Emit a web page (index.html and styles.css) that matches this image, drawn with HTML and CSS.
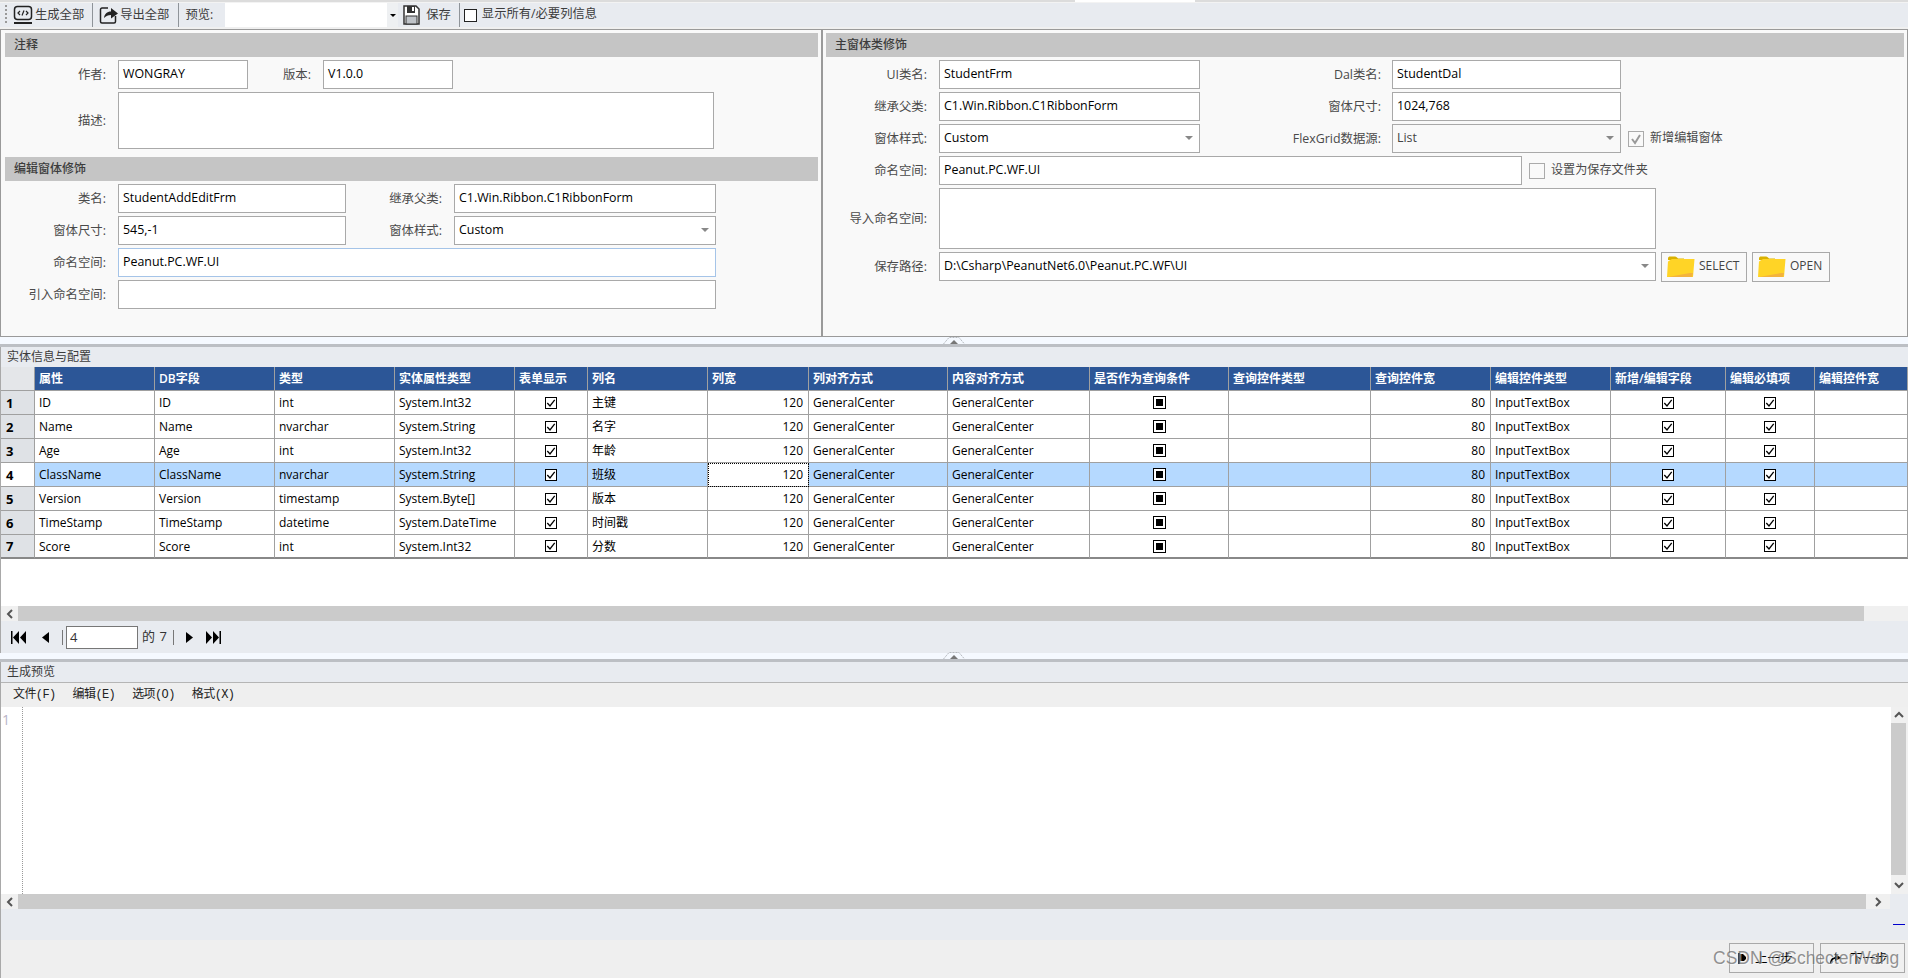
FILE: index.html
```html
<!DOCTYPE html>
<html lang="zh">
<head>
<meta charset="utf-8">
<title>Generator</title>
<link rel="stylesheet" href="styles.css">
</head>
<body>
<svg class="defs" width="0" height="0">
  <symbol id="chk" viewBox="0 0 12 12"><rect x="0.5" y="0.5" width="11" height="11" fill="#fff" stroke="#000"/><path d="M2.300 6l2.700 3L9.700 2.800" fill="none" stroke="#000" stroke-width="1.300"/></symbol>
  <symbol id="ind" viewBox="0 0 13 13"><rect x="0.5" y="0.5" width="12" height="12" fill="#fff" stroke="#000"/><rect x="3" y="3" width="7" height="7" fill="#000"/></symbol>
  <symbol id="folder" viewBox="0 0 28 22"><path d="M1 4V2.500C1 1 2 .5 3 .5h5c1.500 0 2 1 3 2h6v2z" fill="#d9b100"/><path d="M0 21L1 5.500 5 3h22.500L26 21z" fill="#ffd426"/><path d="M1 21l22-4h3l-1 4z" fill="#f3b33d"/></symbol>
  <symbol id="grabber" viewBox="0 0 22 7"><path d="M.5 7L6 .5h10L21.500 7" fill="none" stroke="#b4b8bd" stroke-dasharray="2 1"/><path d="M7 7l4-4 4 4z" fill="#777"/></symbol>
</svg>
<div class="topline"></div>
<div class="toolbar">
  <span class="grip"></span>
  <svg class="ico ico-gen" width="20" height="20" viewBox="0 0 20 20"><rect x="1.500" y="1.500" width="17" height="13" rx="3" fill="none" stroke="#222" stroke-width="1.500"/><path d="M1 18h18" stroke="#222" stroke-width="2"/><path d="M7 6L5 8l2 2M13 6l2 2-2 2M11 5.500L9 10.500" fill="none" stroke="#222" stroke-width="1.200"/></svg>
  <span class="tool-text t-gen">生成全部</span><span class="sep s1"></span>
  <svg class="ico ico-exp" width="20" height="20" viewBox="0 0 20 20"><path d="M9 3H3a1.500 1.500 0 0 0-1.500 1.500v12A1.500 1.500 0 0 0 3 18h12a1.500 1.500 0 0 0 1.500-1.500V11" fill="none" stroke="#222" stroke-width="1.500"/><path d="M5 13c.5-4 3-6.500 7-6.500V3l7 5.500-7 5V10c-3 0-5 1-7 3z" fill="#222"/></svg>
  <span class="tool-text t-exp">导出全部</span><span class="sep s2"></span>
  <span class="tool-text tool-preview">预览:</span>
  <div class="tool-combo"><span class="tool-drop"><i class="caret"></i></span></div>
  <svg class="ico ico-save" width="17" height="20" viewBox="0 0 17 20"><path d="M1 1h12l3 3v15H1z" fill="#fff" stroke="#333" stroke-width="1.500"/><rect x="4" y="1" width="8" height="7" fill="#333"/><rect x="9" y="2" width="2" height="4" fill="#fff"/><rect x="3" y="11" width="11" height="8" fill="#bfc3c8" stroke="#333"/></svg>
  <span class="tool-text tool-save">保存</span><span class="sep s3"></span>
  <span class="tool-check"></span>
  <span class="tool-text tool-all">显示所有/必要列信息</span>
</div>

<div class="top">
  <section class="panel panel-left">
    <h2 class="band">注释</h2>
    <div class="rows">
      <div class="row"><label class="lbl lbl-l">作者:</label><div class="inp w130">WONGRAY</div><label class="lbl lbl-ver">版本:</label><div class="inp w130">V1.0.0</div></div>
      <div class="row tall57"><label class="lbl lbl-l">描述:</label><div class="inp w597"></div></div>
    </div>
    <h2 class="band band2">编辑窗体修饰</h2>
    <div class="rows">
      <div class="row"><label class="lbl lbl-l">类名:</label><div class="inp w228">StudentAddEditFrm</div><label class="lbl lbl-m">继承父类:</label><div class="inp w262">C1.Win.Ribbon.C1RibbonForm</div></div>
      <div class="row"><label class="lbl lbl-l">窗体尺寸:</label><div class="inp w228">545,-1</div><label class="lbl lbl-m">窗体样式:</label><div class="inp w262 combo">Custom<i class="drop"></i></div></div>
      <div class="row"><label class="lbl lbl-l">命名空间:</label><div class="inp w598 focus">Peanut.PC.WF.UI</div></div>
      <div class="row"><label class="lbl lbl-l">引入命名空间:</label><div class="inp w598"></div></div>
    </div>
  </section>
  <section class="panel panel-right">
    <h2 class="band">主窗体类修饰</h2>
    <div class="rows">
      <div class="row"><label class="lbl lbl-r">UI类名:</label><div class="inp w261">StudentFrm</div><label class="lbl lbl-r2">Dal类名:</label><div class="inp w229">StudentDal</div></div>
      <div class="row"><label class="lbl lbl-r">继承父类:</label><div class="inp w261">C1.Win.Ribbon.C1RibbonForm</div><label class="lbl lbl-r2">窗体尺寸:</label><div class="inp w229">1024,768</div></div>
      <div class="row"><label class="lbl lbl-r">窗体样式:</label><div class="inp w261 combo">Custom<i class="drop"></i></div><label class="lbl lbl-r2">FlexGrid数据源:</label><div class="inp w229 combo disabled">List<i class="drop"></i></div><span class="opt opt1"><i class="cb"><svg width="14" height="14" viewBox="0 0 14 14"><path d="M3 7l3 4 5-8" fill="none" stroke="#999" stroke-width="2"/></svg></i>新增编辑窗体</span></div>
      <div class="row"><label class="lbl lbl-r">命名空间:</label><div class="inp w583">Peanut.PC.WF.UI</div><span class="opt opt2"><i class="cb"></i>设置为保存文件夹</span></div>
      <div class="row tall61"><label class="lbl lbl-r">导入命名空间:</label><div class="inp w717"></div></div>
      <div class="row"><label class="lbl lbl-r">保存路径:</label><div class="inp w717 combo">D:\Csharp\PeanutNet6.0\Peanut.PC.WF\UI<i class="drop"></i></div>
        <button class="fbtn fb-sel"><svg width="28" height="22"><use href="#folder"/></svg>SELECT</button>
        <button class="fbtn fb-open"><svg width="28" height="22"><use href="#folder"/></svg>OPEN</button>
      </div>
    </div>
  </section>
</div>

<div class="split"><svg class="grab" width="22" height="7"><use href="#grabber"/></svg></div>

<section class="entity">
  <div class="caption">实体信息与配置</div>
  <div class="grid-row grid-head">
    <div class="c rh"></div><div class="c">属性</div><div class="c">DB字段</div><div class="c">类型</div><div class="c">实体属性类型</div><div class="c">表单显示</div><div class="c">列名</div><div class="c">列宽</div><div class="c">列对齐方式</div><div class="c">内容对齐方式</div><div class="c">是否作为查询条件</div><div class="c">查询控件类型</div><div class="c">查询控件宽</div><div class="c">编辑控件类型</div><div class="c">新增/编辑字段</div><div class="c">编辑必填项</div><div class="c">编辑控件宽</div>
  </div>
  <div class="grid-row">
    <div class="c rh">1</div><div class="c">ID</div><div class="c">ID</div><div class="c">int</div><div class="c">System.Int32</div><div class="c ctr"><svg width="12" height="12"><use href="#chk"/></svg></div><div class="c">主键</div><div class="c num">120</div><div class="c">GeneralCenter</div><div class="c">GeneralCenter</div><div class="c ctr"><svg width="13" height="13"><use href="#ind"/></svg></div><div class="c"></div><div class="c num">80</div><div class="c">InputTextBox</div><div class="c ctr"><svg width="12" height="12"><use href="#chk"/></svg></div><div class="c ctr"><svg width="12" height="12"><use href="#chk"/></svg></div><div class="c"></div>
  </div>
  <div class="grid-row">
    <div class="c rh">2</div><div class="c">Name</div><div class="c">Name</div><div class="c">nvarchar</div><div class="c">System.String</div><div class="c ctr"><svg width="12" height="12"><use href="#chk"/></svg></div><div class="c">名字</div><div class="c num">120</div><div class="c">GeneralCenter</div><div class="c">GeneralCenter</div><div class="c ctr"><svg width="13" height="13"><use href="#ind"/></svg></div><div class="c"></div><div class="c num">80</div><div class="c">InputTextBox</div><div class="c ctr"><svg width="12" height="12"><use href="#chk"/></svg></div><div class="c ctr"><svg width="12" height="12"><use href="#chk"/></svg></div><div class="c"></div>
  </div>
  <div class="grid-row">
    <div class="c rh">3</div><div class="c">Age</div><div class="c">Age</div><div class="c">int</div><div class="c">System.Int32</div><div class="c ctr"><svg width="12" height="12"><use href="#chk"/></svg></div><div class="c">年龄</div><div class="c num">120</div><div class="c">GeneralCenter</div><div class="c">GeneralCenter</div><div class="c ctr"><svg width="13" height="13"><use href="#ind"/></svg></div><div class="c"></div><div class="c num">80</div><div class="c">InputTextBox</div><div class="c ctr"><svg width="12" height="12"><use href="#chk"/></svg></div><div class="c ctr"><svg width="12" height="12"><use href="#chk"/></svg></div><div class="c"></div>
  </div>
  <div class="grid-row selected">
    <div class="c rh">4</div><div class="c">ClassName</div><div class="c">ClassName</div><div class="c">nvarchar</div><div class="c">System.String</div><div class="c ctr"><svg width="12" height="12"><use href="#chk"/></svg></div><div class="c">班级</div><div class="c num cur">120</div><div class="c">GeneralCenter</div><div class="c">GeneralCenter</div><div class="c ctr"><svg width="13" height="13"><use href="#ind"/></svg></div><div class="c"></div><div class="c num">80</div><div class="c">InputTextBox</div><div class="c ctr"><svg width="12" height="12"><use href="#chk"/></svg></div><div class="c ctr"><svg width="12" height="12"><use href="#chk"/></svg></div><div class="c"></div>
  </div>
  <div class="grid-row">
    <div class="c rh">5</div><div class="c">Version</div><div class="c">Version</div><div class="c">timestamp</div><div class="c">System.Byte[]</div><div class="c ctr"><svg width="12" height="12"><use href="#chk"/></svg></div><div class="c">版本</div><div class="c num">120</div><div class="c">GeneralCenter</div><div class="c">GeneralCenter</div><div class="c ctr"><svg width="13" height="13"><use href="#ind"/></svg></div><div class="c"></div><div class="c num">80</div><div class="c">InputTextBox</div><div class="c ctr"><svg width="12" height="12"><use href="#chk"/></svg></div><div class="c ctr"><svg width="12" height="12"><use href="#chk"/></svg></div><div class="c"></div>
  </div>
  <div class="grid-row">
    <div class="c rh">6</div><div class="c">TimeStamp</div><div class="c">TimeStamp</div><div class="c">datetime</div><div class="c">System.DateTime</div><div class="c ctr"><svg width="12" height="12"><use href="#chk"/></svg></div><div class="c">时间戳</div><div class="c num">120</div><div class="c">GeneralCenter</div><div class="c">GeneralCenter</div><div class="c ctr"><svg width="13" height="13"><use href="#ind"/></svg></div><div class="c"></div><div class="c num">80</div><div class="c">InputTextBox</div><div class="c ctr"><svg width="12" height="12"><use href="#chk"/></svg></div><div class="c ctr"><svg width="12" height="12"><use href="#chk"/></svg></div><div class="c"></div>
  </div>
  <div class="grid-row last">
    <div class="c rh">7</div><div class="c">Score</div><div class="c">Score</div><div class="c">int</div><div class="c">System.Int32</div><div class="c ctr"><svg width="12" height="12"><use href="#chk"/></svg></div><div class="c">分数</div><div class="c num">120</div><div class="c">GeneralCenter</div><div class="c">GeneralCenter</div><div class="c ctr"><svg width="13" height="13"><use href="#ind"/></svg></div><div class="c"></div><div class="c num">80</div><div class="c">InputTextBox</div><div class="c ctr"><svg width="12" height="12"><use href="#chk"/></svg></div><div class="c ctr"><svg width="12" height="12"><use href="#chk"/></svg></div><div class="c"></div>
  </div>
  <div class="blank"></div>
  <div class="hbar"><span class="sb-btn sb-l"><svg width="8" height="10" viewBox="0 0 8 10"><path d="M6 1L2 5l4 4" fill="none" stroke="#555" stroke-width="2"/></svg></span><span class="track"></span><span class="sb-end"></span></div>
  <div class="pager">
    <svg class="pg pg-first" width="16" height="13" viewBox="0 0 16 13"><rect x="0" y="0" width="1.500" height="13" fill="#000"/><path d="M8 0v13L2 6.500zM15 0v13L9 6.500z" fill="#000"/></svg>
    <svg class="pg pg-prev" width="7" height="11" viewBox="0 0 7 11"><path d="M7 0v11L0 5.500z" fill="#000"/></svg>
    <span class="pg-sep pg-s1"></span>
    <div class="pg-input">4</div>
    <span class="pg-of">的 7</span>
    <span class="pg-sep pg-s2"></span>
    <svg class="pg pg-next" width="7" height="11" viewBox="0 0 7 11"><path d="M0 0v11l7-5.500z" fill="#000"/></svg>
    <svg class="pg pg-last" width="15" height="13" viewBox="0 0 15 13"><path d="M0 0v13l6-6.500zM7 0v13l6-6.500z" fill="#000"/><rect x="13.500" y="0" width="1.500" height="13" fill="#000"/></svg>
  </div>
</section>

<div class="split split2"><svg class="grab" width="22" height="7"><use href="#grabber"/></svg></div>

<section class="preview">
  <div class="caption caption2">生成预览</div>
  <div class="menu"><span>文件(F)</span><span>编辑(E)</span><span>选项(O)</span><span>格式(X)</span></div>
  <div class="editor">
    <div class="gutter">1</div>
    <div class="code"></div>
    <div class="vbar">
      <span class="vb-btn"><svg width="10" height="8" viewBox="0 0 10 8"><path d="M1 6l4-4 4 4" fill="none" stroke="#555" stroke-width="2"/></svg></span>
      <span class="vtrack"></span>
      <span class="vb-btn vb-end"><svg width="10" height="8" viewBox="0 0 10 8"><path d="M1 2l4 4 4-4" fill="none" stroke="#555" stroke-width="2"/></svg></span>
    </div>
  </div>
  <div class="hbar hbar2"><span class="sb-btn sb-l"><svg width="8" height="10" viewBox="0 0 8 10"><path d="M6 1L2 5l4 4" fill="none" stroke="#555" stroke-width="2"/></svg></span><span class="track"></span><span class="sb-btn sb-r"><svg width="8" height="10" viewBox="0 0 8 10"><path d="M2 1l4 4-4 4" fill="none" stroke="#555" stroke-width="2"/></svg></span></div>
  <div class="status"><i class="under"></i></div>
  <div class="footer">
    <button class="nav nav-prev"><svg width="9" height="11" viewBox="0 0 9 11"><path d="M1 0v11" stroke="#000" stroke-width="1.500"/><path d="M2 1h3l3 3v2L6 8H2z" fill="#000"/></svg>上一步</button>
    <button class="nav nav-next"><svg width="13" height="14" viewBox="0 0 13 14"><path d="M1 13c0-4 2-7 5-7V2l6 5-6 3V8c-2 0-3 2-5 5z" fill="#000"/></svg>下一步</button>
  </div>
</section>
<div class="watermark">CSDN @SchecterWang</div>
</body>
</html>
```
FILE: styles.css
```css
* { box-sizing: border-box; }
html, body { margin: 0; padding: 0; }
body {
  position: relative;
  width: 1908px;
  height: 978px;
  overflow: hidden;
  background: #f0f0f0;
  color: #000;
  font: 12px/1.2 "Open Sans", "Noto Sans CJK SC", sans-serif;
}
.defs { position: absolute; }
svg { display: block; flex: none; }

/* toolbar */
.topline {
  height: 2px;
  background: linear-gradient(90deg, #dcdcdc 1075px, #fff 1075px, #fff 1195px, #dcdcdc 1195px);
}
.toolbar {
  height: 25px;
  margin-bottom: 2px;
  background: #e8ebf0;
  display: flex;
  align-items: center;
  color: #3c3c3c;
  font-size: 12.300px;
  border-top: 1px solid #f3f3f3;
}
.grip {
  width: 2px;
  height: 20px;
  margin-left: 5px;
  background: repeating-linear-gradient(180deg, #999 0 2px, transparent 2px 4px);
}
.ico-gen { margin-left: 6px; }
.tool-text { white-space: nowrap; }
.t-gen { margin-left: 2px; }
.t-exp { margin-left: 1px; }
.sep { width: 1px; height: 24px; background: #8f9499; }
.s1 { margin: 0 6px 0 8px; }
.s2 { margin: 0 6px 0 9px; }
.s3 { margin: 0 4px 0 8px; }
.tool-combo {
  width: 173px;
  height: 24px;
  margin-left: 12px;
  background: #fff;
  display: flex;
  justify-content: flex-end;
}
.tool-drop {
  width: 11px;
  background: #eef0f2;
  display: flex;
  align-items: center;
  justify-content: center;
}
.caret {
  width: 0;
  height: 0;
  border: 3px solid transparent;
  border-top: 3px solid #000;
  border-bottom: 0;
}
.ico-save { margin-left: 5px; }
.tool-save { margin-left: 6px; }
.tool-check {
  width: 13px;
  height: 13px;
  border: 1px solid #222;
  background: #fff;
  margin-right: 5px;
}
.tool-all { position: relative; top: -1px; }

/* top panels */
.top { height: 308px; display: flex; }
.panel {
  height: 308px;
  background: #f9f9f9;
  border: 1px solid #9a9a9a;
  border-width: 1px 0;
}
.panel-left { width: 821px; border-left: 1px solid #9a9a9a; padding: 3px 0 0 4px; }
.panel-right {
  width: 1087px;
  border-left: 2px solid #9a9a9a;
  border-right: 1px solid #9a9a9a;
  padding: 3px 0 0 3px;
}
.band {
  margin: 0;
  height: 24px;
  padding-left: 9px;
  line-height: 24px;
  font-size: 12px;
  font-weight: 500;
  color: #3c3c3c;
  background: #c5c5c5;
}
.panel-left .band { width: 813px; }
.panel-right .band { width: 1078px; }
.band2 { margin-top: 8px; }
.rows { display: flex; flex-direction: column; gap: 3px; padding-top: 3px; }
.row { display: flex; align-items: center; height: 29px; }
.tall57 { height: 57px; }
.tall61 { height: 61px; }
.lbl {
  text-align: right;
  color: #4a4a4a;
  font-size: 12.400px;
  padding-top: 2px;
  white-space: nowrap;
  flex: none;
}
.lbl-l { width: 101px; margin-right: 12px; }
.lbl-ver { width: 63px; margin-right: 12px; }
.lbl-m { width: 96px; margin-right: 12px; }
.lbl-r { width: 101px; margin-right: 12px; }
.lbl-r2 { width: 181px; margin-right: 11px; }
.inp {
  position: relative;
  height: 100%;
  background: #fff;
  border: 1px solid #a9a9a9;
  padding: 5px 4px;
  font-size: 12.400px;
  white-space: nowrap;
  line-height: 16px;
  flex: none;
}
.focus { border-color: #a5c4e8; }
.disabled { background: #f9f9f9; color: #444; }
.w130 { width: 130px; }
.w228 { width: 228px; }
.w229 { width: 229px; }
.w262 { width: 262px; }
.w261 { width: 261px; }
.w583 { width: 583px; }
.w597 { width: 596px; }
.w598 { width: 598px; }
.w717 { width: 717px; }
.combo .drop {
  position: absolute;
  right: 6px;
  top: 11px;
  width: 0;
  height: 0;
  border: 4px solid transparent;
  border-top: 4px solid #888;
  border-bottom: 0;
}
.opt { display: flex; align-items: center; color: #4a4a4a; font-size: 12.100px; white-space: nowrap; }
.opt1 { margin-left: 7px; }
.opt2 { margin-left: 7px; }
.cb {
  width: 16px;
  height: 16px;
  margin-right: 6px;
  border: 1px solid #aaa;
  background: #f9f9f9;
}
.fbtn {
  height: 30px;
  margin-left: 5px;
  padding: 0 0 0 5px;
  border: 1px solid #a9a9a9;
  background: #f9f9f9;
  color: #444;
  font: inherit;
  display: flex;
  align-items: center;
  gap: 4px;
}
.fb-sel { width: 86px; }
.fb-open { width: 78px; }

/* splitters */
.split {
  position: relative;
  height: 10px;
  background: #f5f9ff;
  border-bottom: 3px solid #bcbfc4;
}
.split2 { height: 9px; }
.grab { position: absolute; left: 943px; bottom: 0; }

/* entity grid */
.entity { border-left: 1px solid #a9a9a9; background: #fff; }
.caption {
  height: 20px;
  padding-left: 6px;
  line-height: 20px;
  color: #3c3c3c;
  background: #e8ebf0;
}
.grid-row {
  display: grid;
  grid-template-columns: 34px 120px 120px 120px 120px 73px 120px 101px 139px 142px 139px 142px 120px 120px 115px 89px 93px;
  height: 24px;
  background: #fff;
}
.c {
  display: flex;
  align-items: center;
  padding: 2px 4px 0;
  border-right: 1px solid #a0a0a0;
  border-bottom: 1px solid #a0a0a0;
  white-space: nowrap;
  overflow: hidden;
  color: #000;
}
.grid-head .c { background: #2c5697; color: #fff; font-weight: 600; }
.grid-head .rh { background: #e4e6e9; }
.rh { background: #dfe2e6; font-weight: 700; font-size: 13px; padding-left: 5px; }
.num { justify-content: flex-end; padding-right: 5px; }
.ctr { justify-content: center; padding: 0; }
.selected { background: #b5d9ff; }
.selected .rh { background: #fff; }
.cur { background: #fff; outline: 1px dotted #000; outline-offset: -1px; }
.last .c { border-bottom: 2px solid #888; }
.blank { height: 47px; }

.hbar { display: flex; height: 15px; background: #f0f0f0; }
.sb-btn { display: flex; align-items: center; justify-content: center; width: 17px; background: #f0f0f0; }
.track { flex: 1; background: #cbcbcb; }
.sb-end { width: 44px; background: #f0f0f0; }

.pager {
  position: relative;
  height: 32px;
  background: #e8ebf0;
  display: flex;
  align-items: center;
  color: #333;
  font-size: 13px;
}
.pg-first { margin-left: 10px; }
.pg-prev { margin-left: 15px; }
.pg-sep { width: 1px; height: 15px; background: #777; }
.pg-s1 { margin-left: 13px; }
.pg-input {
  width: 72px;
  height: 23px;
  margin-left: 3px;
  padding-left: 3px;
  line-height: 21px;
  background: #fff;
  border: 1px solid #777;
}
.pg-of { margin-left: 4px; width: 27px; white-space: nowrap; word-spacing: 1px; }
.pg-s2 { margin-left: 4px; }
.pg-next { margin-left: 12px; }
.pg-last { margin-left: 13px; }

/* preview */
.preview { border-left: 1px solid #a9a9a9; background: #e8ebf0; }
.caption2 { border-bottom: 1px solid #b5b5b5; height: 21px; }
.menu {
  height: 24px;
  padding-left: 12px;
  display: flex;
  align-items: center;
  gap: 17px;
  background: #efefef;
  font-family: "Liberation Mono", "Noto Sans CJK SC", monospace;
  letter-spacing: -0.6px;
  color: #222;
}
.menu span { white-space: nowrap; }
.editor { display: flex; height: 187px; }
.gutter {
  width: 22px;
  padding: 5px 0 0 1px;
  background: #fff;
  font-size: 14px;
  color: #b9b4c8;
  border-right: 1px dotted #999;
}
.code { flex: 1; background: #fff; }
.vbar { width: 17px; background: #f0f0f0; display: flex; flex-direction: column; padding-right: 2px; }
.vb-btn { height: 16px; display: flex; align-items: center; justify-content: center; }
.vb-end { height: 19px; }
.vtrack { flex: 1; background: #cbcbcb; }
.hbar2 { width: 1889px; }
.sb-r { width: 24px; }
.status { position: relative; height: 31px; }
.under {
  position: absolute;
  right: 3px;
  top: 15px;
  width: 12px;
  height: 1px;
  background: #0000cc;
}
.footer {
  height: 39px;
  padding: 3px 3px 0 0;
  display: flex;
  justify-content: flex-end;
  gap: 6px;
  background: #efefef;
}
.nav {
  width: 85px;
  height: 30px;
  border: 1px solid #a9a9a9;
  background: #f0f0f0;
  color: #000;
  font: inherit;
  font-size: 12.500px;
  display: flex;
  align-items: center;
  gap: 8px;
  padding: 0 0 0 8px;
}
.watermark {
  position: absolute;
  left: 1713px;
  top: 948px;
  font-family: "Liberation Sans", sans-serif;
  font-size: 17.500px;
  line-height: 20px;
  color: rgba(100, 100, 100, 0.7);
  text-shadow: 1px 1px 0 rgba(255, 255, 255, 0.5);
  white-space: nowrap;
}
```
